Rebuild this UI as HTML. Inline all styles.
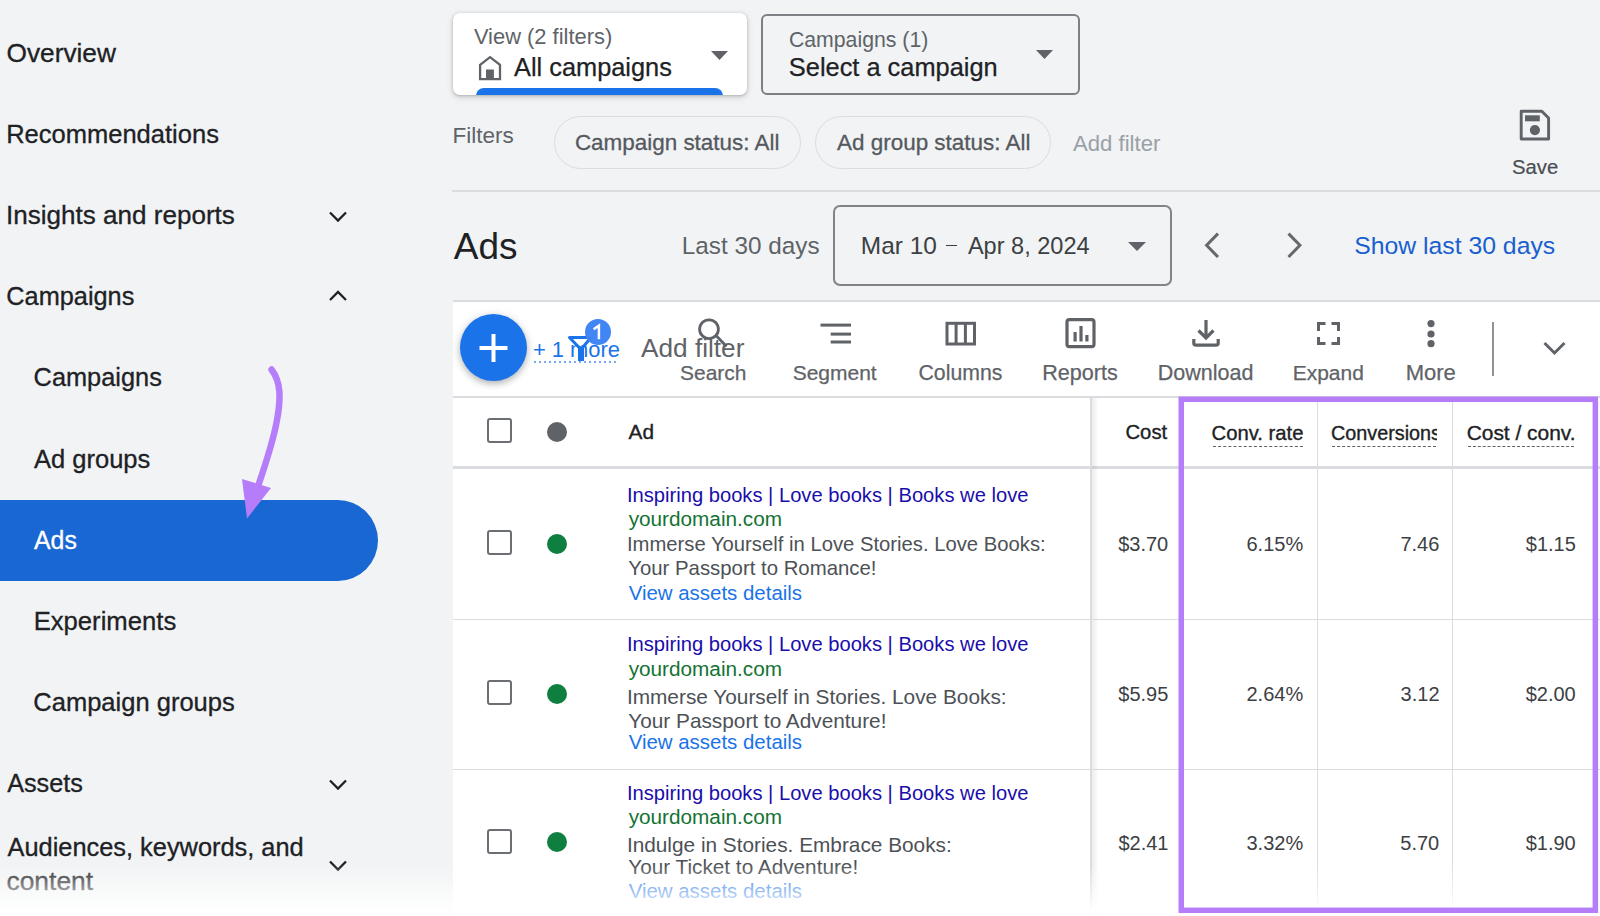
<!DOCTYPE html>
<html><head><meta charset="utf-8"><style>
html,body{margin:0;padding:0}
body{width:1600px;height:916px;position:relative;overflow:hidden;background:#f1f3f4;font-family:"Liberation Sans",sans-serif}
.t{position:absolute;line-height:1;white-space:pre}
</style></head><body>
<div style="position:absolute;left:0;top:500.4px;width:378px;height:80.6px;background:#1967d2;border-radius:0 40.5px 40.5px 0"></div>
<div class="t" style="left:6.52px;top:40px;font-size:26.25px;color:#202124;-webkit-text-stroke:0.3px #202124;">Overview</div>
<div class="t" style="left:6.16px;top:122px;font-size:25.53px;color:#202124;-webkit-text-stroke:0.3px #202124;">Recommendations</div>
<div class="t" style="left:6.06px;top:202px;font-size:26.05px;color:#202124;-webkit-text-stroke:0.3px #202124;">Insights and reports</div>
<div class="t" style="left:6.33px;top:284px;font-size:25.31px;color:#202124;-webkit-text-stroke:0.3px #202124;">Campaigns</div>
<div class="t" style="left:33.58px;top:365px;font-size:25.37px;color:#202124;-webkit-text-stroke:0.3px #202124;">Campaigns</div>
<div class="t" style="left:34.00px;top:447px;font-size:25.52px;color:#202124;-webkit-text-stroke:0.3px #202124;">Ad groups</div>
<div class="t" style="left:33.65px;top:609px;font-size:25.66px;color:#202124;-webkit-text-stroke:0.3px #202124;">Experiments</div>
<div class="t" style="left:33.32px;top:690px;font-size:25.53px;color:#202124;-webkit-text-stroke:0.3px #202124;">Campaign groups</div>
<div class="t" style="left:7.20px;top:771px;font-size:25.23px;color:#202124;-webkit-text-stroke:0.3px #202124;">Assets</div>
<div class="t" style="left:7.50px;top:835px;font-size:25.38px;color:#202124;-webkit-text-stroke:0.3px #202124;">Audiences, keywords, and</div>
<div class="t" style="left:6.44px;top:868px;font-size:26.43px;color:#202124;-webkit-text-stroke:0.3px #202124;">content</div>
<div class="t" style="left:34.00px;top:529px;font-size:24.85px;color:#ffffff;-webkit-text-stroke:0.3px #fff;">Ads</div>
<svg style="position:absolute;left:0;top:0" width="1600" height="916"><g fill="none" stroke="#202124" stroke-width="2.3"><path d="M330,212.5 L338,220.5 L346,212.5"/><path d="M330,300 L338,292 L346,300"/><path d="M330,780.5 L338,788.5 L346,780.5"/><path d="M330,861.5 L338,869.5 L346,861.5"/></g></svg>
<div style="position:absolute;left:453px;top:13px;width:294px;height:82px;background:#fff;border-radius:7px;box-shadow:0 1px 3px rgba(60,64,67,.3),0 2px 6px 1px rgba(60,64,67,.13);overflow:hidden"><div style="position:absolute;left:23px;top:75px;width:247px;height:12px;background:#1a73e8;border-radius:8px 8px 0 0"></div></div>
<div class="t" style="left:473.89px;top:26px;font-size:21.92px;color:#5f6368;">View (2 filters)</div>
<div class="t" style="left:514.00px;top:55px;font-size:25.36px;color:#202124;-webkit-text-stroke:0.25px #202124;">All campaigns</div>
<svg style="position:absolute;left:476px;top:53px" width="28" height="30" viewBox="0 0 28 30"><path d="M4.1,11.8 L14.05,4.1 L24,11.8 L24,26.1 L4.1,26.1 Z" fill="none" stroke="#5f6368" stroke-width="2.3" stroke-linejoin="miter"/><rect x="10" y="16.5" width="7.9" height="9" fill="#5f6368"/></svg>
<svg style="position:absolute;left:700px;top:41px" width="40" height="30"><path d="M11,10 L28,10 L19.5,19 Z" fill="#5f6368"/></svg>
<div style="position:absolute;left:761px;top:14px;width:315px;height:76.5px;border:2px solid #7d8185;border-radius:6px"></div>
<div class="t" style="left:788.94px;top:30px;font-size:21.26px;color:#5f6368;">Campaigns (1)</div>
<div class="t" style="left:788.86px;top:55px;font-size:25.39px;color:#202124;-webkit-text-stroke:0.25px #202124;">Select a campaign</div>
<svg style="position:absolute;left:1025px;top:40px" width="40" height="30"><path d="M11,10 L28,10 L19.5,19 Z" fill="#5f6368"/></svg>
<div class="t" style="left:452.40px;top:125px;font-size:22.5px;color:#5f6368;">Filters</div>
<div style="position:absolute;left:554px;top:116px;width:245px;height:51px;border:1px solid #dadce0;border-radius:27px"></div>
<div class="t" style="left:574.88px;top:132px;font-size:22.44px;color:#55595e;-webkit-text-stroke:0.3px #55595e;">Campaign status: All</div>
<div style="position:absolute;left:815px;top:116px;width:234px;height:51px;border:1px solid #dadce0;border-radius:27px"></div>
<div class="t" style="left:837.00px;top:132px;font-size:22.46px;color:#55595e;-webkit-text-stroke:0.3px #55595e;">Ad group status: All</div>
<div class="t" style="left:1073.00px;top:133px;font-size:22.14px;color:#9aa0a6;">Add filter</div>
<svg style="position:absolute;left:1518px;top:109px" width="34" height="34" viewBox="0 0 34 34"><path d="M3.2,2.2 H23.8 L30.6,9 V30 H3.2 Z" fill="none" stroke="#5f6368" stroke-width="2.9" stroke-linejoin="round"/><rect x="7" y="6.3" width="14.8" height="6" fill="#5f6368"/><circle cx="16.9" cy="21.1" r="5.1" fill="#5f6368"/></svg>
<div class="t" style="left:1511.89px;top:157px;font-size:20.32px;color:#4a4e53;-webkit-text-stroke:0.2px #4a4e53;">Save</div>
<div style="position:absolute;left:452px;top:189.5px;width:1148px;height:2px;background:#dadce0"></div>
<div class="t" style="left:453.75px;top:228px;font-size:36.98px;color:#202124;">Ads</div>
<div class="t" style="left:681.81px;top:234px;font-size:24.3px;color:#5f6368;">Last 30 days</div>
<div style="position:absolute;left:833.4px;top:205px;width:334.6px;height:76.6px;border:2px solid #808388;border-radius:7px"></div>
<div class="t" style="left:860.84px;top:234px;font-size:24.44px;color:#3c4043;">Mar 10</div>
<div style="position:absolute;left:946.3px;top:244.8px;width:11.2px;height:1.7px;background:#3c4043"></div>
<div class="t" style="left:967.90px;top:235px;font-size:23.54px;color:#3c4043;">Apr 8, 2024</div>
<svg style="position:absolute;left:1118px;top:232px" width="40" height="30"><path d="M10,10 L28,10 L19,19 Z" fill="#5f6368"/></svg>
<svg style="position:absolute;left:1195px;top:225px" width="120" height="44" fill="none" stroke="#65686c" stroke-width="3"><path d="M23,8.6 L11.6,20.3 L23,32"/><path d="M93.5,8.6 L104.9,20.3 L93.5,32"/></svg>
<div class="t" style="left:1354.19px;top:234px;font-size:24.77px;color:#1a5fd0;">Show last 30 days</div>
<div style="position:absolute;left:452.5px;top:300px;width:1148px;height:616px;background:#fff;border-top:2px solid #dadce0"></div>
<div style="position:absolute;left:459.5px;top:313.5px;width:67px;height:67px;border-radius:50%;background:#1a73e8;box-shadow:0 3px 6px rgba(60,64,67,.3),0 1px 10px rgba(60,64,67,.15)"></div>
<svg style="position:absolute;left:459.5px;top:313.5px" width="67" height="67"><path d="M33.5,20 V48 M19.5,34 H47.5" stroke="#fff" stroke-width="4"/></svg>
<div class="t" style="left:532.90px;top:339px;font-size:21.91px;color:#1a73e8;">+ 1 more</div>
<div style="position:absolute;left:534px;top:361px;width:85px;height:1.5px;background:repeating-linear-gradient(to right,#7aa7f0 0,#7aa7f0 2.2px,transparent 2.2px,transparent 5px)"></div>
<svg style="position:absolute;left:560px;top:330px" width="40" height="40"><path d="M9.5,7.5 H31 L21,19.5 M9.5,7.5 L21,19.5" fill="none" stroke="#1a73e8" stroke-width="3" stroke-linejoin="round" stroke-linecap="round"/><path d="M18,18 H24 V31 H18 Z" fill="#1a73e8"/></svg>
<div style="position:absolute;left:585px;top:319px;width:26px;height:26px;border-radius:50%;background:#4285f4"></div>
<svg style="position:absolute;left:0;top:0" width="1600" height="916"><path d="M593.6,329.2 L598.9,325.6 V339.2" fill="none" stroke="#fff" stroke-width="2.5" stroke-linejoin="miter"/></svg>
<div class="t" style="left:641.00px;top:335px;font-size:26.21px;color:#5f6368;">Add filter</div>
<svg style="position:absolute;left:690px;top:310px" width="44" height="44" fill="none" stroke="#5f6368" stroke-width="2.8"><circle cx="19" cy="19.2" r="9.4"/><path d="M26.5,26 L36.5,36.5"/></svg>
<div class="t" style="left:680.06px;top:363px;font-size:20.95px;color:#5f6368;-webkit-text-stroke:0.25px #5f6368;">Search</div>
<svg style="position:absolute;left:818px;top:318px" width="36" height="30" fill="#5f6368"><rect x="2.5" y="5.6" width="30.5" height="3"/><rect x="12.7" y="14.6" width="20.3" height="3"/><rect x="12.7" y="22.5" width="20.3" height="3"/></svg>
<div class="t" style="left:792.65px;top:362px;font-size:21.01px;color:#5f6368;-webkit-text-stroke:0.25px #5f6368;">Segment</div>
<svg style="position:absolute;left:940px;top:316px" width="42" height="36" fill="none" stroke="#5f6368" stroke-width="3"><rect x="7" y="7.3" width="27.5" height="20.7"/><path d="M16.1,7.3 V28 M25.4,7.3 V28"/></svg>
<div class="t" style="left:918.54px;top:363px;font-size:21.24px;color:#5f6368;-webkit-text-stroke:0.25px #5f6368;">Columns</div>
<svg style="position:absolute;left:1060px;top:314px" width="42" height="40"><rect x="7" y="5.7" width="27" height="27" rx="2.5" fill="none" stroke="#5f6368" stroke-width="3.2"/><rect x="13.5" y="18" width="3.2" height="9.5" fill="#5f6368"/><rect x="19.4" y="12" width="3.2" height="15.5" fill="#5f6368"/><rect x="25.3" y="21" width="3.2" height="6.5" fill="#5f6368"/></svg>
<div class="t" style="left:1042.27px;top:362px;font-size:21.57px;color:#5f6368;-webkit-text-stroke:0.25px #5f6368;">Reports</div>
<svg style="position:absolute;left:1186px;top:314px" width="40" height="40" fill="none" stroke="#5f6368" stroke-width="3.2"><path d="M20,6 V24 M12.5,16.5 L20,24 L27.5,16.5"/><path d="M7.8,25 V29 Q7.8,31.2 10,31.2 H30 Q32.2,31.2 32.2,29 V25"/></svg>
<div class="t" style="left:1157.78px;top:363px;font-size:21.51px;color:#5f6368;-webkit-text-stroke:0.25px #5f6368;">Download</div>
<svg style="position:absolute;left:1312px;top:318px" width="34" height="34" fill="none" stroke="#5f6368" stroke-width="3"><path d="M6.5,13 V5.5 H13.5 M19.5,5.5 H26.5 V13 M26.5,19 V25.5 H19.5 M13.5,25.5 H6.5 V19"/></svg>
<div class="t" style="left:1292.72px;top:363px;font-size:20.96px;color:#5f6368;-webkit-text-stroke:0.25px #5f6368;">Expand</div>
<svg style="position:absolute;left:1420px;top:316px" width="22" height="36" fill="#5f6368"><circle cx="11" cy="7.6" r="3.6"/><circle cx="11" cy="18" r="3.6"/><circle cx="11" cy="27.7" r="3.6"/></svg>
<div class="t" style="left:1405.64px;top:362px;font-size:22.05px;color:#5f6368;-webkit-text-stroke:0.25px #5f6368;">More</div>
<div style="position:absolute;left:1492px;top:322px;width:1.5px;height:54px;background:#8f9398"></div>
<svg style="position:absolute;left:1535px;top:330px" width="40" height="36" fill="none" stroke="#5f6368" stroke-width="3"><path d="M9.5,13 L19.5,23 L29.5,13"/></svg>
<div style="position:absolute;left:452.5px;top:396px;width:1148px;height:1.5px;background:#dadce0"></div>
<div style="position:absolute;left:452.5px;top:466px;width:1148px;height:3px;background:#dadce0"></div>
<div style="position:absolute;left:486.6px;top:418.40000000000003px;width:21px;height:21px;border:2.8px solid #6b6e72;border-radius:3px"></div>
<div style="position:absolute;left:547px;top:421.7px;width:20px;height:20px;border-radius:50%;background:#5f6368"></div>
<div class="t" style="left:628.60px;top:422px;font-size:20.78px;color:#202124;-webkit-text-stroke:0.35px #202124;">Ad</div>
<div class="t" style="left:1125.48px;top:422px;font-size:20.3px;color:#202124;-webkit-text-stroke:0.35px #202124;">Cost</div>
<div class="t" style="left:1211.59px;top:423px;font-size:20.25px;color:#202124;-webkit-text-stroke:0.35px #202124;">Conv. rate</div>
<div style="position:absolute;left:1212.5px;top:445.5px;width:90px;border-top:1.3px dashed #5f6368"></div>
<div style="position:absolute;left:1331px;top:400px;width:106px;height:60px;overflow:hidden"><div class="t" style="left:0;top:23.64px;font-size:19.8px;color:#202124;-webkit-text-stroke:0.35px #202124;">Conversions</div></div>
<div style="position:absolute;left:1332px;top:445.5px;width:104px;border-top:1.3px dashed #5f6368"></div>
<div class="t" style="left:1466.65px;top:423px;font-size:20.93px;color:#202124;-webkit-text-stroke:0.35px #202124;">Cost / conv.</div>
<div style="position:absolute;left:1467.5px;top:445.5px;width:106px;border-top:1.3px dashed #5f6368"></div>
<div style="position:absolute;left:1090px;top:398px;width:1.5px;height:518px;background:#dadce0"></div>
<div style="position:absolute;left:1091.5px;top:398px;width:7px;height:518px;background:linear-gradient(to right,rgba(0,0,0,.07),rgba(0,0,0,0))"></div>
<div style="position:absolute;left:1316.5px;top:398px;width:1.5px;height:518px;background:#dadce0"></div>
<div style="position:absolute;left:1451.8px;top:398px;width:1.5px;height:518px;background:#dadce0"></div>
<div style="position:absolute;left:486.6px;top:530.0px;width:21px;height:21px;border:2.8px solid #6b6e72;border-radius:3px"></div>
<div style="position:absolute;left:547px;top:533.5px;width:20px;height:20px;border-radius:50%;background:#0f7f3f"></div>
<div class="t" style="left:626.93px;top:485px;font-size:20.17px;color:#1a0dab;">Inspiring books | Love books | Books we love</div>
<div class="t" style="left:628.65px;top:509px;font-size:20.75px;color:#137333;">yourdomain.com</div>
<div class="t" style="left:626.93px;top:534px;font-size:20.25px;color:#4d5156;">Immerse Yourself in Love Stories. Love Books:</div>
<div class="t" style="left:628.24px;top:558px;font-size:20.37px;color:#4d5156;">Your Passport to Romance!</div>
<div class="t" style="left:628.65px;top:583px;font-size:20.44px;color:#1a73e8;">View assets details</div>
<div class="t" style="right:431.75px;text-align:right;top:534px;font-size:20px;color:#3c4043;">$3.70</div>
<div class="t" style="right:296.79px;text-align:right;top:534px;font-size:20px;color:#3c4043;">6.15%</div>
<div class="t" style="right:160.67px;text-align:right;top:534px;font-size:20px;color:#3c4043;">7.46</div>
<div class="t" style="right:24.15px;text-align:right;top:534px;font-size:20px;color:#3c4043;">$1.15</div>
<div style="position:absolute;left:452.5px;top:618.5px;width:1148px;height:1.5px;background:#dadce0"></div>
<div style="position:absolute;left:486.6px;top:680.0px;width:21px;height:21px;border:2.8px solid #6b6e72;border-radius:3px"></div>
<div style="position:absolute;left:547px;top:683.5px;width:20px;height:20px;border-radius:50%;background:#0f7f3f"></div>
<div class="t" style="left:626.93px;top:634px;font-size:20.17px;color:#1a0dab;">Inspiring books | Love books | Books we love</div>
<div class="t" style="left:628.65px;top:659px;font-size:20.75px;color:#137333;">yourdomain.com</div>
<div class="t" style="left:626.88px;top:687px;font-size:20.83px;color:#4d5156;">Immerse Yourself in Stories. Love Books:</div>
<div class="t" style="left:628.23px;top:711px;font-size:20.81px;color:#4d5156;">Your Passport to Adventure!</div>
<div class="t" style="left:628.65px;top:732px;font-size:20.44px;color:#1a73e8;">View assets details</div>
<div class="t" style="right:431.65px;text-align:right;top:684px;font-size:20px;color:#3c4043;">$5.95</div>
<div class="t" style="right:296.79px;text-align:right;top:684px;font-size:20px;color:#3c4043;">2.64%</div>
<div class="t" style="right:160.47px;text-align:right;top:684px;font-size:20px;color:#3c4043;">3.12</div>
<div class="t" style="right:24.25px;text-align:right;top:684px;font-size:20px;color:#3c4043;">$2.00</div>
<div style="position:absolute;left:452.5px;top:768.5px;width:1148px;height:1.5px;background:#dadce0"></div>
<div style="position:absolute;left:486.6px;top:828.5px;width:21px;height:21px;border:2.8px solid #6b6e72;border-radius:3px"></div>
<div style="position:absolute;left:547px;top:832px;width:20px;height:20px;border-radius:50%;background:#0f7f3f"></div>
<div class="t" style="left:626.93px;top:783px;font-size:20.17px;color:#1a0dab;">Inspiring books | Love books | Books we love</div>
<div class="t" style="left:628.65px;top:807px;font-size:20.75px;color:#137333;">yourdomain.com</div>
<div class="t" style="left:626.88px;top:835px;font-size:20.8px;color:#4d5156;">Indulge in Stories. Embrace Books:</div>
<div class="t" style="left:628.23px;top:857px;font-size:20.75px;color:#4d5156;">Your Ticket to Adventure!</div>
<div class="t" style="left:628.65px;top:881px;font-size:20.44px;color:#1a73e8;">View assets details</div>
<div class="t" style="right:431.55px;text-align:right;top:833px;font-size:20px;color:#3c4043;">$2.41</div>
<div class="t" style="right:296.79px;text-align:right;top:833px;font-size:20px;color:#3c4043;">3.32%</div>
<div class="t" style="right:160.77px;text-align:right;top:833px;font-size:20px;color:#3c4043;">5.70</div>
<div class="t" style="right:24.25px;text-align:right;top:833px;font-size:20px;color:#3c4043;">$1.90</div>
<div style="position:absolute;left:0;top:864px;width:1600px;height:52px;background:linear-gradient(to bottom,rgba(255,255,255,0),rgba(255,255,255,.97) 90%,rgba(255,255,255,1))"></div>
<svg style="position:absolute;left:0;top:0" width="1600" height="916"><rect x="1181.25" y="399.3" width="414.1" height="511" fill="none" stroke="#b67dfa" stroke-width="5.5"/></svg>
<svg style="position:absolute;left:0;top:0" width="1600" height="916"><path d="M271.5,369.5 C281,382 281,398 277,420 C273,443 266,462 257.5,488" fill="none" stroke="#b67dfa" stroke-width="6.5" stroke-linecap="round"/><path d="M242,479 L271,488 L247,518.5 Z" fill="#b67dfa"/></svg>
</body></html>
